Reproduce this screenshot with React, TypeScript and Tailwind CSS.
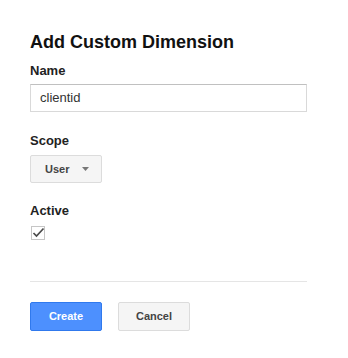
export default function App() {
  return (
    <div className="w-[348px] h-[358px] bg-white font-['Liberation_Sans',Arial,sans-serif]">
      <div className="pl-[30px] pr-[41px] pt-[30px]">
        <h1 className="text-[18px] leading-[24px] font-bold text-[#111]">Add Custom Dimension</h1>
        <div className="mt-[9px] text-[13px] leading-[16px] font-bold text-[#222]">Name</div>
        <div className="mt-[5px] h-[28px] border border-[#d9d9d9] border-t-[#c0c0c0] flex items-center px-[9px] text-[13px] text-[#333]">clientid</div>
        <div className="mt-[21px] text-[13px] leading-[16px] font-bold text-[#222]">Scope</div>
        <div className="mt-[6px] w-[72px] h-[28px] border border-[#dcdcdc] rounded-[2px] bg-[#f5f5f5] flex items-center pl-[14px] text-[11px] font-bold text-[#444]">
          <span>User</span>
          <svg className="ml-[13px]" width="7" height="4" viewBox="0 0 7 4"><path d="M0 0h7L3.5 4z" fill="#777" /></svg>
        </div>
        <div className="mt-[20px] text-[13px] leading-[16px] font-bold text-[#222]">Active</div>
        <div className="mt-[7px] ml-[1px] w-[14px] h-[14px] border border-[#c6c6c6] relative">
          <svg className="absolute left-[0px] top-[-1px]" width="13" height="13" viewBox="0 0 13 13"><path d="M1.5 7l3 3L11.5 2.5" fill="none" stroke="#4a4a4a" strokeWidth="1.7" /></svg>
        </div>
        <div className="mt-[41px] h-px bg-[#e5e5e5]"></div>
        <div className="mt-[20px] flex gap-[16px]">
          <button className="w-[72px] h-[29px] rounded-[2px] border border-[#3079ed] bg-[#4d90fe] text-white text-[11px] font-bold">Create</button>
          <button className="w-[72px] h-[29px] rounded-[2px] border border-[#dcdcdc] bg-[#f5f5f5] text-[#444] text-[11px] font-bold">Cancel</button>
        </div>
      </div>
    </div>
  );
}
